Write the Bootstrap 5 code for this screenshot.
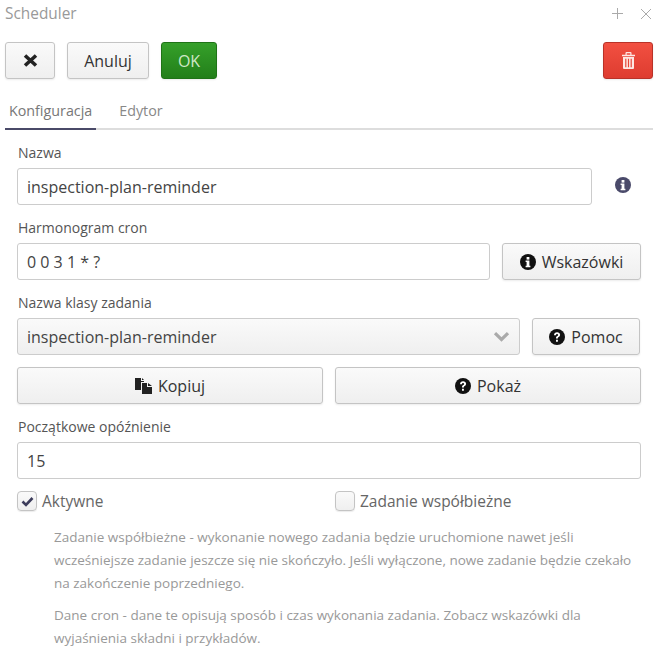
<!DOCTYPE html>
<html lang="pl">
<head>
    <meta charset="UTF-8">
    <meta name="viewport" content="width=device-width, initial-scale=1.0">
    <title>Scheduler</title>
    <link href="https://cdn.jsdelivr.net/npm/bootstrap@5.3.0/dist/css/bootstrap.min.css" rel="stylesheet">
    <style>
        body { font-family: "Open Sans", sans-serif; font-size: 16px; color: #444; background: #fff; overflow: hidden; }
        .dlg-head { height: 26px; padding: 1px 8px 0 5px; color: #999; font-size: 15.4px; line-height: 25px; }
        .dlg-head svg { display: block; }
        .dlg-head-icons { gap: 18px; }
        .dlg-toolbar { padding: 16px 6px 0 5px; gap: 12px; }
        .act-btn { height: 37px; padding: 0; font-size: 16px; line-height: 1; color: #333; border: 1px solid #c4c4c4; border-radius: 3px; background: linear-gradient(#fafafa, #efefef); box-shadow: 0 1px 2px rgba(0,0,0,.08); display: flex; align-items: center; justify-content: center; gap: 6px; }
        .act-x { width: 50px; }
        .act-cancel { width: 82px; }
        .act-ok { width: 56px; color: #cfe8c6; background: linear-gradient(#35a02a, #237f1a); border-color: #1f7317; }
        .act-del { width: 50px; background: linear-gradient(#f25041, #de3c30); border-color: #b93228; }
        .dlg-tabs { margin: 13px 6px 0 5px; border-bottom: 2px solid #ddd; height: 38px; }
        .dlg-tabs .nav-link { border: 0; padding: 1px 4px 0; margin-right: 19px; height: 38px; line-height: 35px; font-size: 14.3px; color: #888; border-radius: 0; background: none; }
        .dlg-tabs .nav-link.active { color: #777; border-bottom: 2px solid #4a4a68; background: none; }
        .dlg-form { padding: 13px 18px 0 17px; }
        .fld-group { margin-top: 13px; }
        .fld-label { display: block; font-size: 14px; line-height: 20px; margin: 0 0 5px 1px; color: #555; }
        .fld-input { height: 37px; border: 1px solid #ccc; border-radius: 3px; font-size: 16px; color: #444; padding: 0 9px; box-shadow: none; }
        .fld-select { background-image: linear-gradient(#fafafa, #efefef); padding: 0 9px; height: 37px; border: 1px solid #ccc; border-radius: 3px; font-size: 16px; color: #444; display: flex; align-items: center; justify-content: space-between; }
        .fld-row { gap: 12px; }
        .btn-row { gap: 12px; margin-top: 12px; }
        .info-slot { width: 49px; padding: 0 0 4px 12px; }
        .side-btn-lg { width: 139px; }
        .side-btn { width: 108px; margin-right: 1px; }
        .chk-row { gap: 12px; margin-top: 12px; }
        .chk-item { gap: 5px; }
        .chk-box { width: 20px; height: 20px; border: 1px solid #c4c4c4; border-radius: 4px; background: linear-gradient(#fafafa, #efefef); box-shadow: 0 1px 1px rgba(0,0,0,.08); display: flex; align-items: center; justify-content: center; }
        .chk-text { color: #666; font-size: 15.5px; line-height: 20px; }
        .hint-text { margin: 15px 0 0 37px; color: #999; font-size: 13.5px; line-height: 23px; }
        .hint-text + .hint-text { margin-top: 9px; }
    </style>
</head>
<body>
    <div class="dlg-head d-flex justify-content-between align-items-center">
        <span>Scheduler</span>
        <div class="d-flex align-items-center dlg-head-icons">
            <svg width="11" height="11" viewBox="0 0 11 11"><path d="M5.5 0v11M0 5.5h11" stroke="#aaa" stroke-width="1"/></svg>
            <svg width="10" height="10" viewBox="0 0 10 10"><path d="M0 0l10 10M10 0L0 10" stroke="#aaa" stroke-width="1"/></svg>
        </div>
    </div>

    <div class="dlg-toolbar d-flex">
        <button class="btn act-btn act-x" type="button">
            <svg width="15" height="15" viewBox="0 0 15 15"><path d="M2 2.500l11 10M13 2.500l-11 10" stroke="#222" stroke-width="3.6"/></svg>
        </button>
        <button class="btn act-btn act-cancel" type="button">Anuluj</button>
        <button class="btn act-btn act-ok" type="button">OK</button>
        <button class="btn act-btn act-del ms-auto" type="button">
            <svg width="13" height="17" viewBox="0 0 13 17" fill="#fde8e4"><path d="M3.500 2.800V1a1 1 0 0 1 1-1h4a1 1 0 0 1 1 1v1.800H13v1.400H0V2.800zm1.200 0h3.600V1.200H4.700zM1 5h11v11a1 1 0 0 1-1 1H2a1 1 0 0 1-1-1zm2.200 1.800v8.400h1.200V6.800zm2.700 0v8.400h1.200V6.800zm2.700 0v8.400h1.200V6.800z" fill-rule="evenodd"/></svg>
        </button>
    </div>

    <ul class="nav dlg-tabs">
        <li class="nav-item"><a class="nav-link active" href="#">Konfiguracja</a></li>
        <li class="nav-item"><a class="nav-link" href="#">Edytor</a></li>
    </ul>

    <div class="dlg-form">
        <div>
            <label class="fld-label">Nazwa</label>
            <div class="d-flex align-items-center">
                <input class="form-control fld-input" value="inspection-plan-reminder">
                <div class="info-slot flex-shrink-0 d-flex justify-content-center">
                    <svg width="16" height="16" viewBox="0 0 16 16"><circle cx="8" cy="8" r="8" fill="#4a4a6a"/><rect x="6.6" y="3" width="2.8" height="2.6" fill="#fff"/><path d="M5.6 6.6h3.800v5.200h1v1.400H5.600v-1.400h1V8h-1z" fill="#fff"/></svg>
                </div>
            </div>
        </div>

        <div class="fld-group">
            <label class="fld-label">Harmonogram cron</label>
            <div class="d-flex fld-row">
                <input class="form-control fld-input" value="0 0 3 1 * ?">
                <button class="btn act-btn side-btn-lg flex-shrink-0" type="button">
                    <svg width="16" height="16" viewBox="0 0 16 16"><circle cx="8" cy="8" r="8" fill="#111"/><rect x="6.6" y="3" width="2.8" height="2.6" fill="#fff"/><path d="M5.6 6.6h3.800v5.200h1v1.400H5.600v-1.400h1V8h-1z" fill="#fff"/></svg>
                    Wskazówki
                </button>
            </div>
        </div>

        <div class="fld-group">
            <label class="fld-label">Nazwa klasy zadania</label>
            <div class="d-flex fld-row">
                <div class="fld-select flex-grow-1">
                    <span>inspection-plan-reminder</span>
                    <svg width="17" height="11" viewBox="0 0 17 11"><path d="M2 2.200l6.500 6.300L15 2.200" fill="none" stroke="#aaa" stroke-width="3.2"/></svg>
                </div>
                <button class="btn act-btn side-btn flex-shrink-0" type="button">
                    <svg width="16" height="16" viewBox="0 0 16 16"><circle cx="8" cy="8" r="8" fill="#111"/><path d="M5 6.200c0-1.800 1.300-2.900 3.100-2.900 1.700 0 3 1 3 2.500 0 1.300-.8 1.800-1.500 2.300-.5.3-.7.6-.7 1.100v.3H7v-.5c0-1 .4-1.500 1.200-2 .5-.3.9-.6.9-1.100 0-.5-.4-.8-1-.8-.7 0-1.100.4-1.100 1.100zM7 10.800h1.900v1.900H7z" fill="#fff"/></svg>
                    Pomoc
                </button>
            </div>
        </div>

        <div class="d-flex btn-row">
            <button class="btn act-btn flex-fill w-50" type="button">
                <svg width="17" height="16" viewBox="0 0 17 16" fill="#222"><path d="M0 0h6v3h3v1H6v8H0z"/><path d="M7 0l2 2H7z"/><path d="M7 5h5v4h5v7H7zM13 5l4 3h-4z"/></svg>
                Kopiuj
            </button>
            <button class="btn act-btn flex-fill w-50" type="button">
                <svg width="16" height="16" viewBox="0 0 16 16"><circle cx="8" cy="8" r="8" fill="#111"/><path d="M5 6.200c0-1.800 1.300-2.900 3.100-2.900 1.700 0 3 1 3 2.500 0 1.300-.8 1.800-1.500 2.300-.5.3-.7.6-.7 1.100v.3H7v-.5c0-1 .4-1.500 1.200-2 .5-.3.9-.6.9-1.100 0-.5-.4-.8-1-.8-.7 0-1.100.4-1.100 1.100zM7 10.800h1.900v1.900H7z" fill="#fff"/></svg>
                Pokaż
            </button>
        </div>

        <div class="fld-group">
            <label class="fld-label">Początkowe opóźnienie</label>
            <input class="form-control fld-input" value="15">
        </div>

        <div class="d-flex chk-row">
            <div class="w-50 d-flex align-items-center chk-item">
                <span class="chk-box">
                    <svg width="13" height="11" viewBox="0 0 13 11"><path d="M1.500 5.500l3.500 3.500 6.500-7" fill="none" stroke="#3d3d5c" stroke-width="2.600"/></svg>
                </span>
                <span class="chk-text">Aktywne</span>
            </div>
            <div class="w-50 d-flex align-items-center chk-item">
                <span class="chk-box"></span>
                <span class="chk-text">Zadanie współbieżne</span>
            </div>
        </div>

        <p class="hint-text">Zadanie współbieżne - wykonanie nowego zadania będzie uruchomione nawet jeśli wcześniejsze zadanie jeszcze się nie skończyło. Jeśli wyłączone, nowe zadanie będzie czekało na zakończenie poprzedniego.</p>
        <p class="hint-text">Dane cron - dane te opisują sposób i czas wykonania zadania. Zobacz wskazówki dla wyjaśnienia składni i przykładów.</p>
    </div>

    <script src="https://cdn.jsdelivr.net/npm/bootstrap@5.3.0/dist/js/bootstrap.bundle.min.js"></script>
</body>
</html>
